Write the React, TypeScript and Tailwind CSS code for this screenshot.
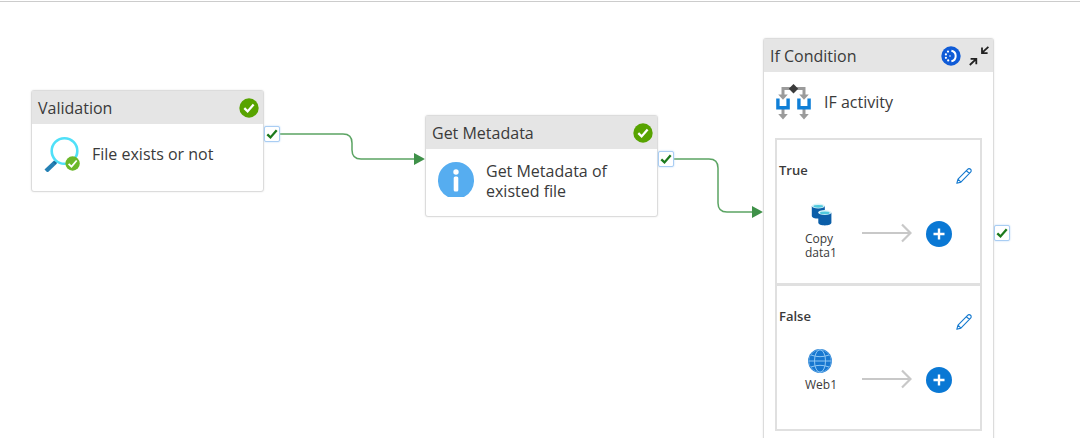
import type { ReactNode } from "react";

function SuccessBadge() {
  return (
    <svg className="size-5 shrink-0" viewBox="0 0 20 20" role="img" aria-label="Succeeded">
      <circle cx="10" cy="10" r="9.7" fill="#57a300" />
      <path d="M5.3 10.2 8.6 13.4 14.6 6.6" fill="none" stroke="#fff" strokeWidth="2.3" />
    </svg>
  );
}

function RunningBadge() {
  return (
    <svg className="size-5 shrink-0" viewBox="0 0 20 20" role="img" aria-label="In progress">
      <circle cx="10" cy="10" r="9.7" fill="#0f5bd7" />
      <path d="M10.4 4.8a5.3 5.3 0 0 1 0 10.4" fill="none" stroke="#fff" strokeWidth="2" />
      <g fill="#fff">
        <circle cx="7" cy="5.6" r="1.1" />
        <circle cx="4.9" cy="8.4" r="1.1" />
        <circle cx="4.9" cy="11.8" r="1.1" />
        <circle cx="7.2" cy="14.4" r="1.1" />
        <circle cx="9" cy="10" r=".8" />
      </g>
    </svg>
  );
}

function CollapseIcon() {
  return (
    <svg className="h-5 w-5" viewBox="0 0 20 20" fill="none" stroke="#222" strokeWidth="1.8" aria-hidden="true">
      <path d="M19.4.8 13.2 6.700M13 1.600v5.500h5.600M.8 19 7 13.200M1.600 12.800h5.700v5.500" />
    </svg>
  );
}

function ValidationIcon() {
  return (
    <svg className="size-9 shrink-0" viewBox="0 0 36 36" aria-hidden="true">
      <path d="M2 35 11.500 26" stroke="#2580b4" strokeWidth="4.400" />
      <path d="M10.200 27.200l2.600-2.600" stroke="#1b6a9c" strokeWidth="3" />
      <circle cx="20.500" cy="15" r="12.800" fill="#fff" stroke="#50e0f8" strokeWidth="2.600" />
      <circle cx="28.600" cy="27.500" r="7.200" fill="#6bb82a" />
      <path d="M24.600 27.800 27.500 30.700 32.700 24.500" fill="none" stroke="#fff" strokeWidth="1.800" />
    </svg>
  );
}

function InfoIcon() {
  return (
    <svg className="size-9 shrink-0" viewBox="0 0 36 36" aria-hidden="true">
      <path d="M10 36A18.200 18.200 0 0 1 0 19A18 18 0 0 1 36 19A18.200 18.200 0 0 1 26 36Z" fill="#56adf0" />
      <circle cx="18" cy="11" r="2.700" fill="#fff" />
      <rect x="15.700" y="15.600" width="4.600" height="15" rx="1.500" fill="#fff" />
    </svg>
  );
}

function IfIcon() {
  return (
    <svg className="size-9 shrink-0" viewBox="0 0 36 36" aria-hidden="true">
      <path d="M7 11V4.500h21V11M7 25v6M28 25v6" fill="none" stroke="#9b9b9b" strokeWidth="3" />
      <path d="M2.200 10.500h9.600L7 15.800ZM23.200 10.500h9.600L28 15.800ZM2.200 30h9.600L7 35.400ZM23.200 30h9.600L28 35.400Z" fill="#9b9b9b" />
      <path d="M17.500 0 22.200 4.700l-4.700 4.700-4.700-4.700Z" fill="#3b3b3b" />
      <path d="M1.900 14.500v9.300h10.200v-9.300M22.900 14.500v9.300h10.200v-9.300" fill="none" stroke="#0f7fd7" strokeWidth="3.400" />
    </svg>
  );
}

function PencilIcon() {
  return (
    <svg className="size-4" viewBox="0 0 16 16" fill="none" stroke="#1479cf" strokeWidth="1.1" strokeLinejoin="round" aria-hidden="true">
      <path d="M.8 15.3 2 11.2 11.6 1.3a2 2 0 0 1 3 2.9L4.9 14.1ZM10.4 2.6l3 2.9M2 11.2l2.9 2.9" />
    </svg>
  );
}

function CopyDataIcon() {
  return (
    <svg className="ml-1 size-6" viewBox="0 0 24 24" aria-hidden="true">
      <path d="M2.800 3v10c0 1.600 2.900 2.600 6.500 2.600s6.500-1 6.500-2.600V3Z" fill="#0b5ea8" />
      <ellipse cx="9.300" cy="3" rx="6.500" ry="2.400" fill="#d9f3f8" />
      <ellipse cx="9.300" cy="3.300" rx="4.900" ry="1.400" fill="#4fc9dd" />
      <path d="M9.300 9.800v10c0 1.600 2.900 2.600 6.500 2.600s6.600-1 6.600-2.600v-10Z" fill="#0b5ea8" />
      <ellipse cx="15.800" cy="9.600" rx="6.600" ry="2.500" fill="#d9f3f8" />
      <ellipse cx="15.800" cy="9.900" rx="4.900" ry="1.400" fill="#4fc9dd" />
    </svg>
  );
}

function GlobeIcon() {
  return (
    <svg className="ml-[3px] size-6" viewBox="0 0 24 24" aria-hidden="true">
      <circle cx="12" cy="12" r="11.900" fill="#1777d0" />
      <g fill="none" stroke="#8fc8f5" strokeWidth="1">
        <circle cx="12" cy="12" r="11.200" strokeOpacity=".5" />
        <ellipse cx="12" cy="12" rx="5.500" ry="11.300" />
        <path d="M.8 12h22.400M3 6q9 3.400 18 0M3 18q9-3.400 18 0" />
      </g>
    </svg>
  );
}

function Node({ title, badge, icon, text, children, place }: {
  title: string;
  badge: ReactNode;
  icon: ReactNode;
  text: string;
  children?: ReactNode;
  place: string;
}) {
  return (
    <section className={`absolute rounded-[3px] border border-[#dcdcdc] bg-white shadow-[0_0_2px_#e5e5e5] ${place}`}>
      <header className="flex h-[33px] items-center justify-between bg-[#e5e5e5] pr-1 pl-1.5">
        <h2 className="text-base">{title}</h2>
        {badge}
      </header>
      <div className="flex items-start gap-3 px-3 pt-3">
        {icon}
        <p className="flex min-h-9 items-center text-base leading-5">{text}</p>
      </div>
      {children}
    </section>
  );
}

function Port({ place }: { place: string }) {
  return (
    <span className={`absolute flex size-4 items-center justify-center rounded-[2px] border border-[#a9cdf3] bg-white shadow-[0_0_2px_#b5d5f6] ${place}`}>
      <svg className="size-3" viewBox="0 0 12 12" role="img" aria-label="On success">
        <path d="M1.300 6.300 4.500 9.400 10.700 2.300" fill="none" stroke="#1c7a1c" strokeWidth="2.300" />
      </svg>
    </span>
  );
}

function Branch({ name, label, icon, className }: {
  name: string;
  label: string;
  icon: ReactNode;
  className: string;
}) {
  return (
    <div className={`pr-2 pl-0.5 ${className}`}>
      <div className="flex h-[63px] items-center justify-between pb-0.5">
        <h3 className="text-[13px] font-semibold">{name}</h3>
        <button type="button" aria-label={`Edit ${name} activities`} className="mt-2.5">
          <PencilIcon />
        </button>
      </div>
      <div className="flex items-start pl-[26px]">
        <div className="w-[57px]">
          {icon}
          <p className="mt-[5px] w-9 text-xs leading-[14px]">{label}</p>
        </div>
        <svg className="mt-5 h-5 w-[50px]" viewBox="0 0 50 20" fill="none" stroke="#c8c8c8" strokeWidth="2.200" aria-hidden="true">
          <path d="M0 10h48M40 1.500 48.500 10 40 18.500" />
        </svg>
        <button
          type="button"
          aria-label={`Add activity to ${name}`}
          className="mt-[18px] ml-3.5 flex size-[26px] items-center justify-center rounded-full bg-[#0a78d4]"
        >
          <svg className="size-3" viewBox="0 0 12 12" stroke="#fff" strokeWidth="2.400" aria-hidden="true">
            <path d="M6 .5v11M.5 6h11" />
          </svg>
        </button>
      </div>
    </div>
  );
}

export default function App() {
  return (
    <main className="relative h-screen overflow-hidden bg-white pt-px font-['Open_Sans','Noto_Sans',sans-serif] text-[#3a3a3a]">
      <hr className="border-t border-[#cccccc]" />
      <svg className="absolute top-0 left-0 h-[438px] w-[1080px]" viewBox="0 0 1080 438" fill="none" stroke="#5ba463" strokeWidth="1.500" aria-hidden="true">
        <path d="M280 134h63q9 0 9 9v7q0 9 9 9h54M674 159h35q9 0 9 9v35q0 9 9 9h26" />
        <path d="M414 153v12l11-6ZM752 206v12l11-6Z" fill="#3f9149" stroke="none" />
      </svg>

      <Node
        place="left-[31px] top-[90px] h-[102px] w-[233px]"
        title="Validation"
        badge={<SuccessBadge />}
        icon={<ValidationIcon />}
        text="File exists or not"
      />
      <Port place="left-[264px] top-[126px]" />

      <Node
        place="left-[425px] top-[115px] h-[102px] w-[233px]"
        title="Get Metadata"
        badge={<SuccessBadge />}
        icon={<InfoIcon />}
        text="Get Metadata of existed file"
      />
      <Port place="left-[658px] top-[151px]" />

      <Node
        place="left-[763px] top-[38px] w-[231px] pb-4"
        title="If Condition"
        badge={
          <div className="flex items-center gap-2">
            <RunningBadge />
            <button type="button" aria-label="Collapse">
              <CollapseIcon />
            </button>
          </div>
        }
        icon={<IfIcon />}
        text="IF activity"
      >
        <div className="mx-[11px] mt-[18px] border-2 border-[#e0e0e0]">
          <Branch name="True" label="Copy data1" icon={<CopyDataIcon />} className="h-[146px] border-b-[3px] border-[#e0e0e0]" />
          <Branch name="False" label="Web1" icon={<GlobeIcon />} className="h-[143px]" />
        </div>
      </Node>
      <Port place="left-[994px] top-[225px]" />
    </main>
  );
}
